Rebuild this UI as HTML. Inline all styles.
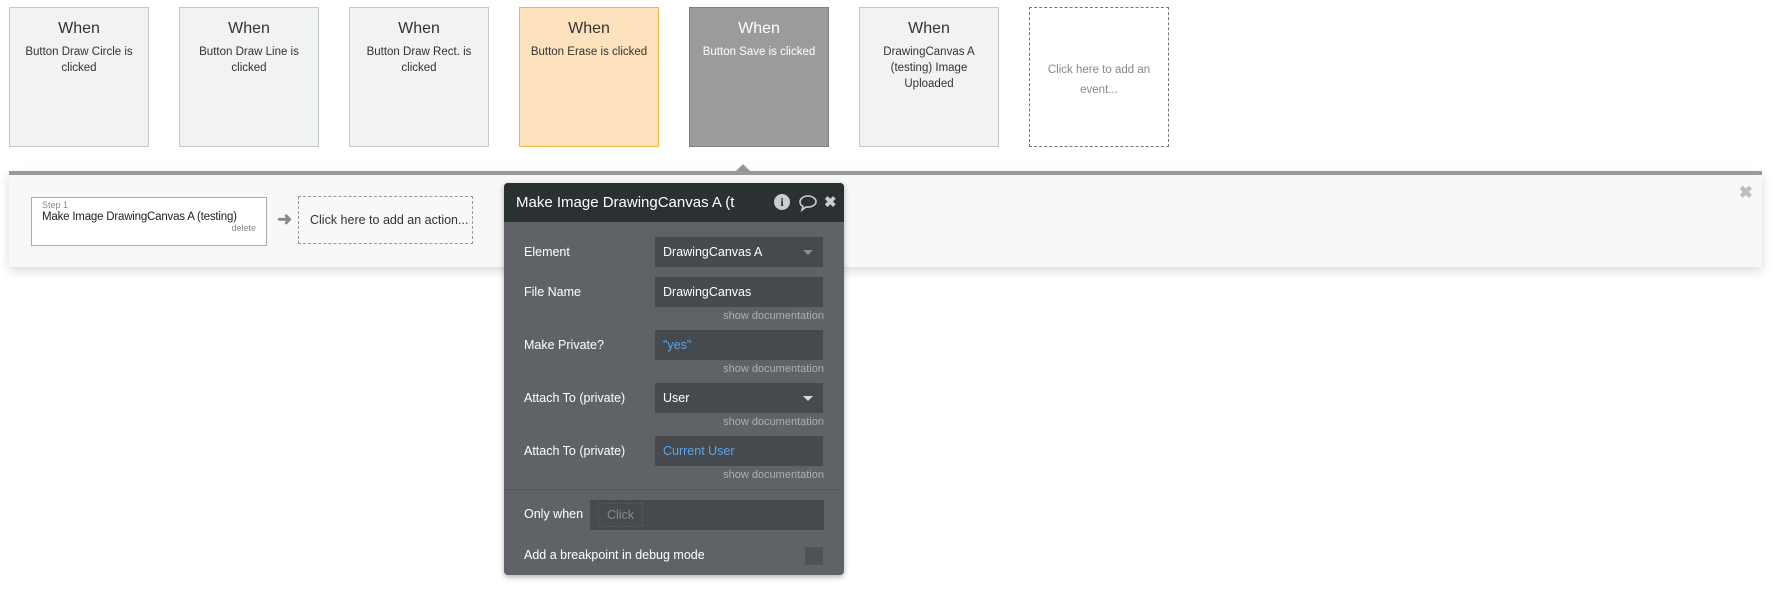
<!DOCTYPE html>
<html><head><meta charset="utf-8"><style>
*{box-sizing:border-box;margin:0;padding:0}
body{width:1784px;height:590px;background:#fff;font-family:"Liberation Sans",sans-serif;position:relative;overflow:hidden;color:#333}
.card{position:absolute;top:7px;width:140px;height:140px;border:1px solid #c3c9cc;background:#f1f2f2;text-align:center;font-size:11.5px;line-height:16px;padding:0 8px}
.card h3{font-weight:normal;font-size:16px;margin:11px 0 5px;line-height:20px}
.bar{position:absolute;left:9px;top:171px;width:1753px;height:96px;background:#f8f8f8;border-top:4px solid #999;box-shadow:0 4px 10px rgba(0,0,0,.15)}
.panel{position:absolute;left:504px;top:183px;width:340px;height:392px;background:#5f6368;border-radius:4px;box-shadow:0 2px 6px rgba(0,0,0,.3)}
.ph{height:39px;background:#2b3033;border-radius:4px 4px 0 0;color:#fff;font-size:15px;line-height:39px;padding-left:12px}
.lbl{position:absolute;left:20px;color:#fff;font-size:12.5px}
.inp{position:absolute;left:151px;width:168px;height:30px;background:#464a4f;color:#fff;font-size:12.5px;line-height:30px;padding-left:8px}
.doc{position:absolute;right:20px;color:#aab0b5;font-size:11px}
.blue{color:#5aa6e8}
</style></head><body>
<div class="card" style="left:9px"><h3>When</h3>Button Draw Circle is clicked</div>
<div class="card" style="left:179px"><h3>When</h3>Button Draw Line is clicked</div>
<div class="card" style="left:349px"><h3>When</h3>Button Draw Rect. is clicked</div>
<div class="card" style="left:519px;background:#fde2bd;border-color:#f5b443"><h3>When</h3>Button Erase is clicked</div>
<div class="card" style="left:689px;background:#9b9b9b;border-color:#808080;color:#fff"><h3>When</h3>Button Save is clicked</div>
<div class="card" style="left:859px"><h3>When</h3>DrawingCanvas A (testing) Image Uploaded</div>
<div class="card" style="left:1029px;background:#fff;border:1px dashed #777;color:#888;padding-top:52px;line-height:20px">Click here to add an event...</div>
<div style="position:absolute;left:736px;top:164px;width:0;height:0;border-left:7px solid transparent;border-right:7px solid transparent;border-bottom:7px solid #999"></div>
<div class="bar">
 <div style="position:absolute;left:22px;top:22px;width:236px;height:49px;border:1px solid #aaa;background:#fff;padding:2px 10px">
  <div style="font-size:9px;color:#888">Step 1</div>
  <div style="font-size:11.5px;color:#222;margin-top:1px;white-space:nowrap;letter-spacing:-0.2px">Make Image DrawingCanvas A (testing)</div>
  <div style="font-size:9px;color:#888;text-align:right">delete</div>
 </div>
 <div style="position:absolute;left:268px;top:34px;color:#888;font-size:18px;font-weight:bold">&#10140;</div>
 <div style="position:absolute;left:289px;top:21px;width:175px;height:48px;border:1px dashed #999;font-size:12.5px;color:#333;line-height:46px;padding-left:11px">Click here to add an action...</div>
 <div style="position:absolute;right:9px;top:8px;color:#b8c0c4;font-size:17px;font-weight:bold">&#10006;</div>
</div>
<div class="panel">
 <div class="ph">Make Image DrawingCanvas A (t
  <span style="position:absolute;left:270px;top:11px;width:16px;height:16px;border-radius:50%;background:#ccc;color:#2b3033;font-size:12px;font-weight:bold;line-height:16px;text-align:center;font-family:'Liberation Serif',serif">i</span>
  <svg style="position:absolute;left:294px;top:10px" width="20" height="20" viewBox="0 0 20 20"><path d="M10 3C5 3 2 6 2 9c0 2 1 3.5 3 4.5L4 17l4-3c.7.1 1.3.1 2 .1 5 0 8-3 8-5.5S15 3 10 3z" fill="none" stroke="#ccc" stroke-width="1.6"/></svg>
  <span style="position:absolute;left:320px;top:0;color:#ccc;font-size:15px;font-weight:bold">&#10006;</span>
 </div>
 <div class="lbl" style="top:62px">Element</div>
 <div class="inp" style="top:54px">DrawingCanvas A<span style="position:absolute;right:10px;top:13px;border-left:5px solid transparent;border-right:5px solid transparent;border-top:5px solid #8a8f94"></span></div>
 <div class="lbl" style="top:102px">File Name</div>
 <div class="inp" style="top:94px">DrawingCanvas</div>
 <div class="doc" style="top:127px">show documentation</div>
 <div class="lbl" style="top:155px">Make Private?</div>
 <div class="inp blue" style="top:147px">"yes"</div>
 <div class="doc" style="top:180px">show documentation</div>
 <div class="lbl" style="top:208px">Attach To (private)</div>
 <div class="inp" style="top:200px">User<span style="position:absolute;right:10px;top:13px;border-left:5px solid transparent;border-right:5px solid transparent;border-top:5px solid #ddd"></span></div>
 <div class="doc" style="top:233px">show documentation</div>
 <div class="lbl" style="top:261px">Attach To (private)</div>
 <div class="inp blue" style="top:253px">Current User</div>
 <div class="doc" style="top:286px">show documentation</div>
 <div style="position:absolute;left:0;right:0;top:306px;border-top:1px solid #55595e"></div>
 <div class="lbl" style="top:324px">Only when</div>
 <div class="inp" style="top:317px;left:86px;width:234px"><span style="display:inline-block;border:1px dashed #55595e;color:#888;padding:0 8px;line-height:22px">Click</span></div>
 <div class="lbl" style="top:365px">Add a breakpoint in debug mode</div>
 <div style="position:absolute;left:301px;top:364px;width:18px;height:18px;background:#4e5256"></div>
</div>
</body></html>
